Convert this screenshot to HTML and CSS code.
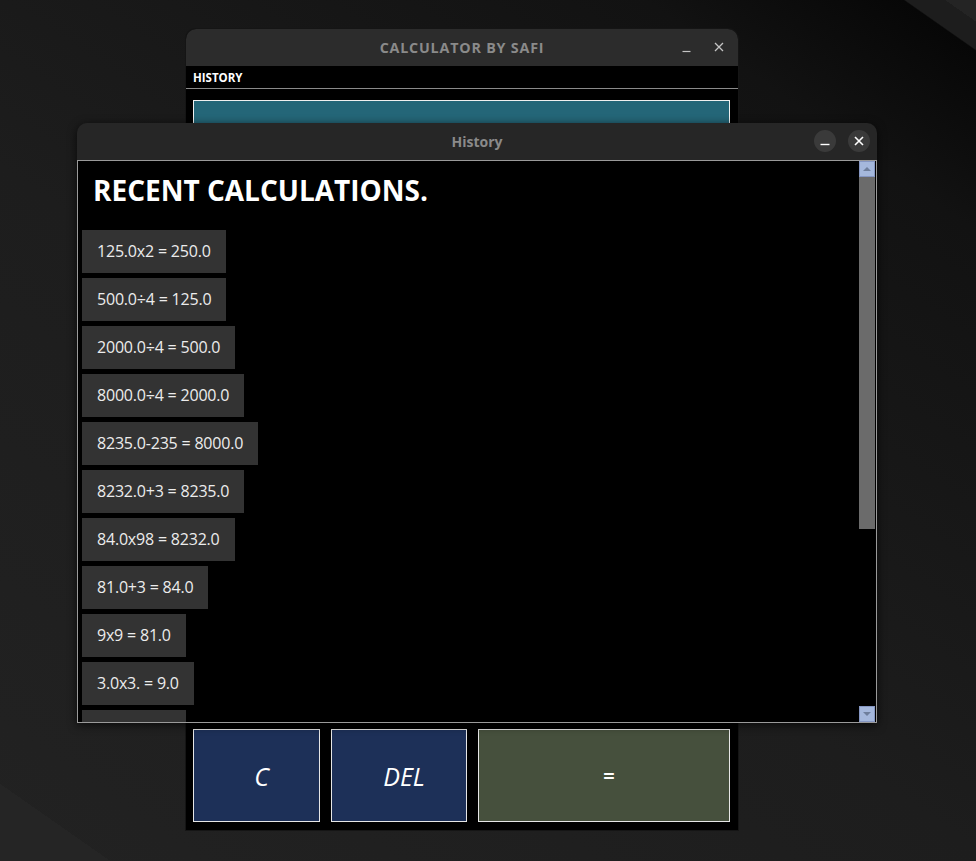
FILE: index.html
```html
<!DOCTYPE html>
<html>
<head>
<meta charset="utf-8">
<title>Calculator</title>
<link rel="stylesheet" href="styles.css">
</head>
<body>
<div class="desktop">
  <div class="win win-back">
    <div class="titlebar back-title">
      <span class="title">CALCULATOR BY SAFI</span>
      <div class="plain-ctrls">
        <svg class="ctl" width="12" height="12" viewBox="0 0 12 12"><path d="M1.5 10.5h8" stroke="#c4c4c4" stroke-width="1.2"/></svg>
        <svg class="ctl" width="12" height="12" viewBox="0 0 12 12"><path d="M2 2l8 8M10 2l-8 8" stroke="#c4c4c4" stroke-width="1.3"/></svg>
      </div>
    </div>
    <div class="menubar"><span class="menu-item">HISTORY</span></div>
    <div class="calc-body">
      <div class="display"></div>
      <div class="btn-row">
        <div class="key key-c">C</div>
        <div class="key key-del">DEL</div>
        <div class="key key-eq">=</div>
      </div>
    </div>
  </div>

  <div class="win win-hist">
    <div class="titlebar hist-title">
      <span class="title">History</span>
      <div class="round-ctrls">
        <span class="circ"><svg width="22" height="22" viewBox="0 0 22 22"><path d="M6.5 14.5h9" stroke="#ffffff" stroke-width="1.4"/></svg></span>
        <span class="circ"><svg width="22" height="22" viewBox="0 0 22 22"><path d="M7 7l8 8M15 7l-8 8" stroke="#ffffff" stroke-width="1.6"/></svg></span>
      </div>
    </div>
    <div class="hist-content">
      <div class="list">
        <h1 class="heading">RECENT CALCULATIONS.</h1>
        <div class="items">
          <div class="item">125.0x2 = 250.0</div>
          <div class="item">500.0÷4 = 125.0</div>
          <div class="item">2000.0÷4 = 500.0</div>
          <div class="item">8000.0÷4 = 2000.0</div>
          <div class="item">8235.0-235 = 8000.0</div>
          <div class="item">8232.0+3 = 8235.0</div>
          <div class="item">84.0x98 = 8232.0</div>
          <div class="item">81.0+3 = 84.0</div>
          <div class="item">9x9 = 81.0</div>
          <div class="item">3.0x3. = 9.0</div>
          <div class="item item-cut"></div>
        </div>
      </div>
      <div class="scrollbar">
        <div class="sb-btn"><svg width="14" height="14" viewBox="0 0 14 14"><path d="M3 9h8L7 5z" fill="#6f7f9c"/></svg></div>
        <div class="sb-thumb"></div>
        <div class="sb-track"></div>
        <div class="sb-btn"><svg width="14" height="14" viewBox="0 0 14 14"><path d="M3 5h8L7 9z" fill="#6f7f9c"/></svg></div>
      </div>
    </div>
  </div>
</div>
</body>
</html>
```
FILE: styles.css
```css
* { box-sizing: border-box; }
html, body { margin: 0; padding: 0; }
body {
  width: 976px;
  height: 861px;
  overflow: hidden;
  font-family: "Open Sans", "Noto Sans", sans-serif;
}
.desktop {
  position: relative;
  width: 976px;
  height: 861px;
  background:
    linear-gradient(215deg, transparent 95%, #252525 95%),
    linear-gradient(35deg, transparent 98.6%, #242424 98.6%),
    linear-gradient(35deg, #222222 0%, #1d1d1d 45%, #121212 85%, #070707 96.7%, #1d1d1d 96.8%);
}
.win {
  position: absolute;
  display: flex;
  flex-direction: column;
}
.titlebar {
  position: relative;
  height: 37px;
  flex: none;
  display: flex;
  align-items: center;
  justify-content: center;
  border-radius: 10px 10px 0 0;
}
.title {
  font-weight: 700;
  font-size: 14px;
  color: #8a8a8a;
}

/* back window */
.win-back {
  left: 186px;
  top: 29px;
  width: 552px;
  height: 801px;
  background: #000;
  border-radius: 10px 10px 0 0;
  box-shadow: 0 0 0 1px #151515;
}
.back-title { background: #2c2c2c; }
.back-title .title { letter-spacing: 0.8px; font-size: 14.3px; }
.plain-ctrls {
  position: absolute;
  right: 13px;
  top: 12px;
  display: flex;
  gap: 20px;
}
.ctl { display: block; }
.menubar {
  height: 23px;
  flex: none;
  border-bottom: 1px solid #8a8a8a;
  display: flex;
  align-items: center;
  padding-left: 7px;
}
.menu-item {
  color: #fff;
  font-weight: 700;
  font-size: 11.5px;
}
.calc-body {
  flex: 1;
  display: flex;
  flex-direction: column;
  padding: 11px 8px 8px 7px;
  gap: 40px;
}
.display {
  flex: 1;
  background: #246678;
  border: 1px solid #f0f0f0;
}
.btn-row {
  display: flex;
  gap: 11px;
  height: 93px;
  flex: none;
}
.key {
  border: 1px solid #e6e6e6;
  display: flex;
  align-items: center;
  justify-content: center;
  padding-left: 10px;
  color: #fff;
  font-size: 25px;
  font-style: italic;
}
.key-c { width: 127px; background: #1d3058; }
.key-del { width: 136px; background: #1d3058; }
.key-eq { width: 252px; background: #46503d; font-style: normal; font-weight: 700; font-size: 20px; }

/* history window */
.win-hist {
  left: 77px;
  top: 123px;
  width: 800px;
  height: 600px;
  border-radius: 10px 10px 0 0;
  box-shadow: 0 2px 10px rgba(0,0,0,0.7);
}
.hist-title { background: #262626; }
.round-ctrls {
  position: absolute;
  right: 7px;
  top: 7px;
  display: flex;
  gap: 12px;
}
.circ {
  width: 22px;
  height: 22px;
  border-radius: 50%;
  background: #3a3a3a;
  display: block;
}
.circ svg { display: block; }
.hist-content {
  flex: 1;
  display: flex;
  background: #000;
  border: 1px solid #9a9a9a;
  overflow: hidden;
}
.list {
  flex: 1;
  overflow: hidden;
  padding: 0 0 0 4px;
}
.heading {
  margin: 0 0 21px 0;
  padding: 10px 0 0 11px;
  color: #fff;
  font-size: 28px;
  font-weight: 700;
  line-height: 38px;
  letter-spacing: 0;
}
.items {
  display: flex;
  flex-direction: column;
  align-items: flex-start;
  gap: 5px;
}
.item {
  flex: none;
  height: 43px;
  line-height: 43px;
  padding: 0 15px;
  background: #333333;
  color: #ececec;
  font-size: 16px;
  letter-spacing: -0.2px;
  white-space: nowrap;
}
.item-cut { width: 104px; }
.scrollbar {
  width: 17px;
  flex: none;
  display: flex;
  flex-direction: column;
  padding-right: 1px;
}
.sb-btn {
  height: 16px;
  flex: none;
  background: #a5b8dc;
  border: 1px solid #8596c2;
  display: flex;
  align-items: center;
  justify-content: center;
}
.sb-btn svg { display: block; }
.sb-thumb {
  height: 352px;
  flex: none;
  background: #6b6b6b;
}
.sb-track { flex: 1; background: #000; }
```
